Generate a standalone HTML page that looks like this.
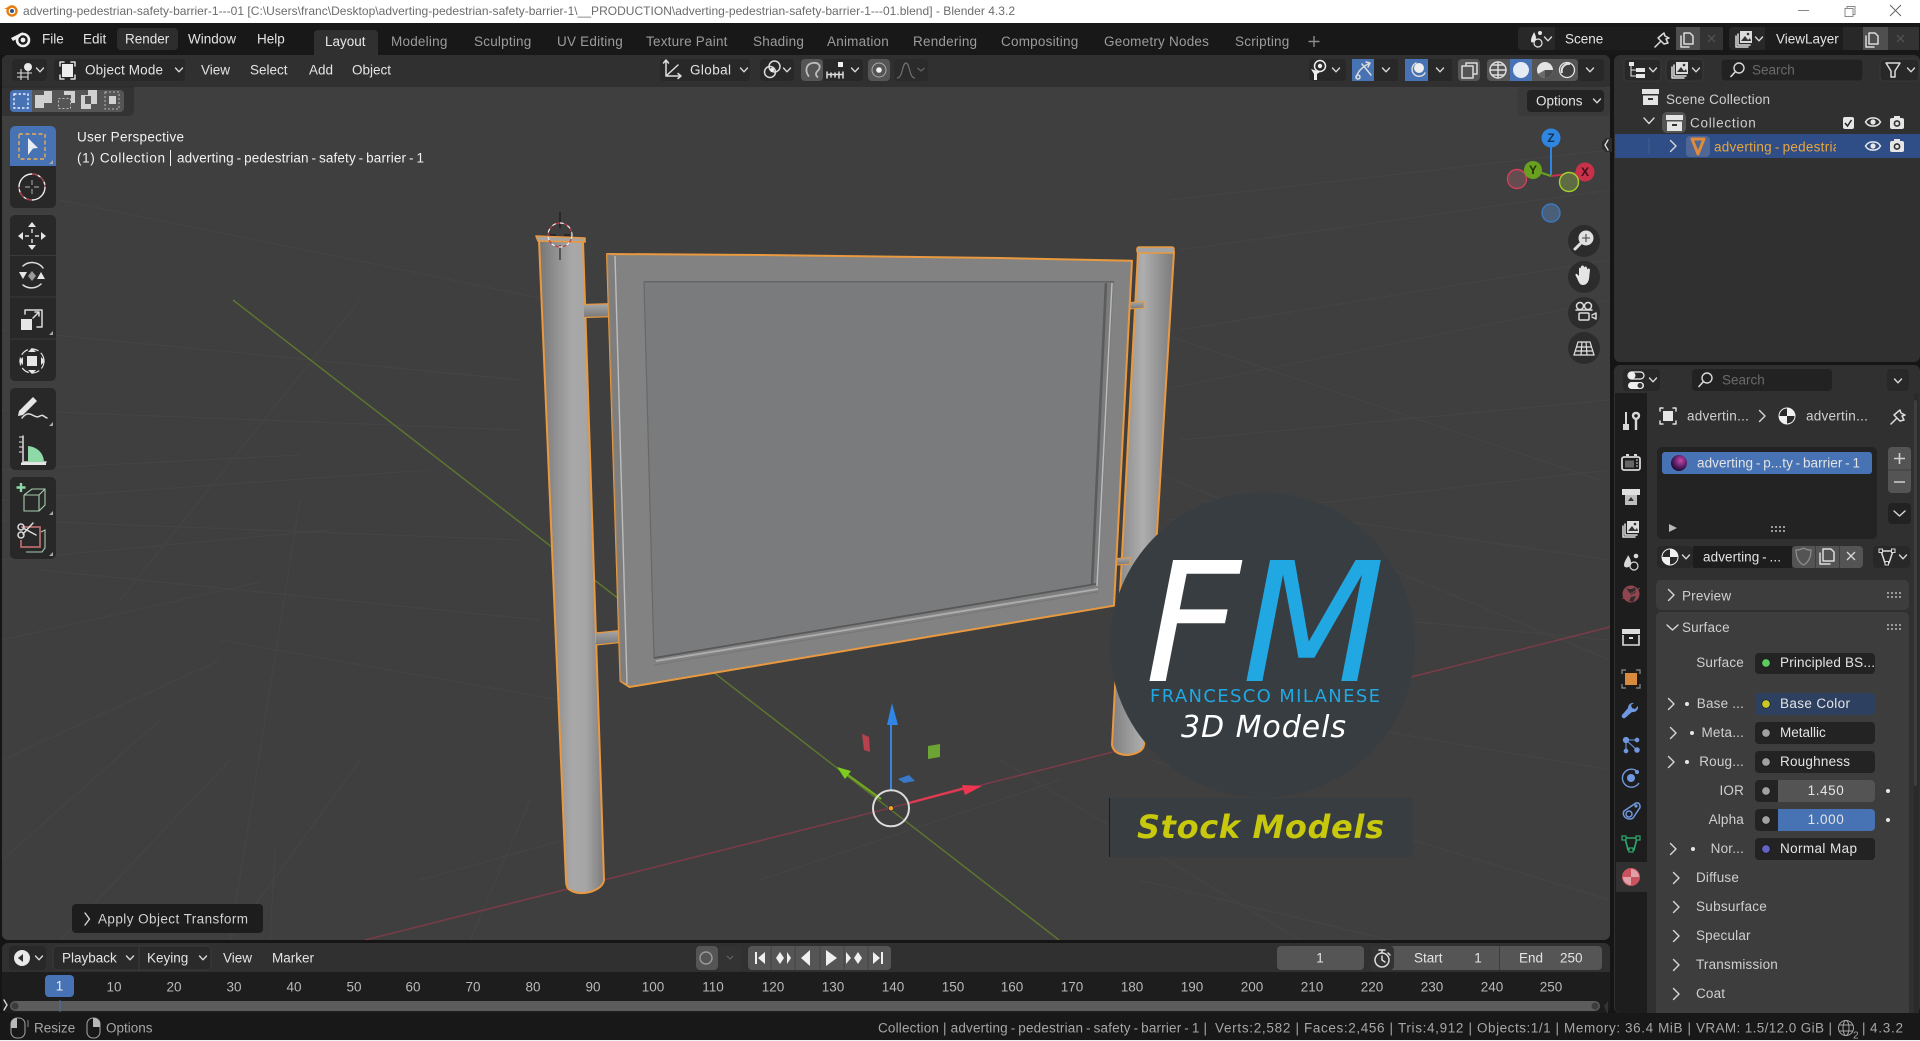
<!DOCTYPE html>
<html><head><meta charset="utf-8"><title>Blender</title>
<style>
html,body{margin:0;padding:0;background:#161616;width:1920px;height:1041px;overflow:hidden}
svg{position:absolute;left:0;top:0;display:block}
text{font-family:"Liberation Sans","DejaVu Sans",sans-serif;font-size:13.5px;dominant-baseline:central;fill:#d6d6d6;white-space:pre}
.m{fill:#e4e4e4}.tab{fill:#9c9c9c;font-size:13.5px;letter-spacing:.22px}.h{fill:#d2d2d2}.s{fill:#a6a6a6}.l{fill:#cfcfcf;letter-spacing:.18px}.e{text-anchor:end}.c{text-anchor:middle}
.n{fill:#b8b8b8}.v{letter-spacing:.6px}
.dv{font-family:"DejaVu Sans",sans-serif;dominant-baseline:alphabetic}
.ch{fill:none;stroke:#d8d8d8;stroke-width:1.4;stroke-linecap:round;stroke-linejoin:round}
.ic{fill:none;stroke:#dcdcdc;stroke-width:1.5;stroke-linecap:round;stroke-linejoin:round}
.w{fill:#e4e4e4}
</style></head><body>
<svg width="1920" height="1041" viewBox="0 0 1920 1041" xmlns="http://www.w3.org/2000/svg">
<defs>
<linearGradient id="pl" x1="0" x2="1" y1="0" y2="0"><stop offset="0" stop-color="#767676"/><stop offset=".5" stop-color="#a8a8a8"/><stop offset=".72" stop-color="#a6a6a6"/><stop offset="1" stop-color="#7c7c7c"/></linearGradient>
<linearGradient id="pr" x1="0" x2="1" y1="0" y2="0"><stop offset="0" stop-color="#808080"/><stop offset=".5" stop-color="#aeaeae"/><stop offset="1" stop-color="#7a7a7a"/></linearGradient>
<linearGradient id="cn" x1="0" x2="0" y1="0" y2="1"><stop offset="0" stop-color="#a8a8a8"/><stop offset="1" stop-color="#777"/></linearGradient>
<radialGradient id="sph" cx=".6" cy=".35" r=".7"><stop offset="0" stop-color="#c84aa8"/><stop offset=".55" stop-color="#5c1f6a"/><stop offset="1" stop-color="#140a24"/></radialGradient>
<clipPath id="vp"><rect x="2" y="87" width="1608" height="853"/></clipPath>
<clipPath id="oc"><rect x="1714" y="134" width="122" height="24"/></clipPath>
<g id="dn"><path class="ch" d="M-3.5 -2 L0 1.8 L3.5 -2"/></g>
<g id="rt"><path class="ch" d="M-2.5 -5.5 L3 0 L-2.5 5.5"/></g>
<g id="coll"><path class="w" d="M0 0h17v5H0zM1 6.5h15V16H1z"/><rect x="6" y="9" width="5" height="2" fill="#303030"/></g>
<g id="eye"><path d="M-7.5 0C-4.500 -5.500 4.500 -5.500 7.500 0C4.500 5.500 -4.500 5.500 -7.500 0Z" fill="none" stroke="#e6e6e6" stroke-width="1.500"/><circle r="2.600" fill="#e6e6e6"/></g>
<g id="cam"><rect x="-7" y="-5" width="14" height="11" rx="2" fill="#e6e6e6"/><rect x="-3" y="-7" width="6" height="3" fill="#e6e6e6"/><circle cy=".5" r="3.4" fill="#303030"/><circle cy=".5" r="1.8" fill="#e6e6e6"/></g>
<g id="dots"><path fill="#9a9a9a" d="M0 0h2v2H0zM4 0h2v2H4zM8 0h2v2H8zM12 0h2v2h-2zM0 4h2v2H0zM4 4h2v2H4zM8 4h2v2H8zM12 4h2v2h-2z"/></g>
<g id="crn"><path d="M0 4L4 0V4Z" fill="#a8a8a8"/></g>
<g id="search"><circle cx="2" cy="-2" r="5" fill="none" stroke="#d8d8d8" stroke-width="1.4"/><path d="M-1.5 1.5L-6 6.5" stroke="#d8d8d8" stroke-width="1.6" stroke-linecap="round"/></g>
<g id="filt"><path class="ic" d="M-7 -7H7L2 1V7L-2 7V1Z"/></g>
<g id="imgs"><path class="ic" stroke-width="1.2" d="M-8 -3V8H4M-6 -5V6H6"/><rect x="-4" y="-8" width="12" height="12" fill="#dcdcdc"/><path d="M-3 2L1 -3L4 1L6 -1L7 2Z" fill="#333"/><circle cx="4" cy="-5" r="1.3" fill="#333"/></g>
<g id="pin"><path class="ic" stroke-width="1.2" d="M-8 8L-2 2M-5 -1L1 -6L2 -3L6 -1L3 0L5 4L1 5Z" stroke="#8f8f8f"/></g>
<g id="mat"><circle r="8" fill="#f0f0f0"/><path d="M0 -8A8 8 0 0 0 -8 0H0V8A8 8 0 0 0 8 0H0Z" fill="#2a2a2a"/><circle r="8" fill="none" stroke="#f0f0f0" stroke-width="1"/></g>
</defs>

<!-- base -->
<rect width="1920" height="1041" fill="#151515"/>
<rect width="1920" height="23" fill="#fff"/>
<rect y="1040" width="1920" height="1" fill="#f2f2f2"/>
<rect y="23" width="1920" height="32" fill="#181818"/>

<!-- title bar -->
<circle cx="12" cy="11" r="4.5" fill="none" stroke="#e87d0d" stroke-width="2.4"/><circle cx="12" cy="11" r="2" fill="#265787"/><path d="M4 9L12 5L10 9Z" fill="#e87d0d"/>
<text x="23" y="11" textLength="992" style="font-size:12px;fill:#6c6c6c">adverting-pedestrian-safety-barrier-1---01 [C:\Users\franc\Desktop\adverting-pedestrian-safety-barrier-1\__PRODUCTION\adverting-pedestrian-safety-barrier-1---01.blend] - Blender 4.3.2</text>
<path d="M1798 10.5h11" stroke="#888" stroke-width="1"/>
<path d="M1845 8.5h8v8h-8zM1847 8.5v-2h8v8h-2" fill="none" stroke="#8a8a8a"/>
<path d="M1890 5l11 11M1901 5l-11 11" stroke="#666" stroke-width="1"/>

<!-- top bar -->
<g transform="translate(21,39)"><circle cx="2" cy="1" r="6" fill="none" stroke="#efefef" stroke-width="2.6"/><circle cx="2" cy="1" r="2.4" fill="#efefef"/><path d="M-10 -1L2 -7L-1 -2L-8 2Z" fill="#efefef"/></g>
<text class="m" x="42" y="39">File</text><text class="m" x="83" y="39">Edit</text>
<rect x="117" y="28" width="61" height="22" rx="4" fill="#2d2d2d"/>
<text class="m" x="125" y="39">Render</text><text class="m" x="188" y="39">Window</text><text class="m" x="257" y="39">Help</text>
<path d="M314 34a4 4 0 0 1 4-4h56a4 4 0 0 1 4 4v21h-64z" fill="#303030"/>
<text x="325" y="41.5" style="fill:#e8e8e8">Layout</text>
<text class="tab" x="391" y="41.5">Modeling</text><text class="tab" x="474" y="41.5">Sculpting</text><text class="tab" x="557" y="41.5">UV Editing</text><text class="tab" x="646" y="41.5">Texture Paint</text><text class="tab" x="753" y="41.5">Shading</text><text class="tab" x="827" y="41.5">Animation</text><text class="tab" x="913" y="41.5">Rendering</text><text class="tab" x="1001" y="41.5">Compositing</text><text class="tab" x="1104" y="41.5">Geometry Nodes</text><text class="tab" x="1235" y="41.5">Scripting</text>
<path d="M1314 36v11M1308.500 41.500h11" stroke="#8c8c8c" stroke-width="1.4"/>

<rect x="1518" y="27" width="205" height="23" rx="4" fill="#282828"/><rect x="1555" y="27" width="100" height="23" fill="#1d1d1d"/><rect x="1655" y="27" width="35" height="23" fill="#1d1d1d"/>
<rect x="1676" y="27" width="24" height="23" fill="#4f4f4f"/><rect x="1700" y="27" width="23" height="23" fill="#333"/>
<g transform="translate(1537,39)"><path d="M-6 2C-6 -2 -3 -6 -3 -7C-2 -5 -1 -3 -1 -1C-1 3 -6 5 -6 2Z" fill="#e6e6e6"/><circle cx="1" cy="4" r="4" fill="none" stroke="#e6e6e6" stroke-width="1.2"/><circle cx="3" cy="-6" r="2" fill="#e6e6e6"/></g>
<use href="#dn" x="1548" y="39"/>
<text class="m" x="1565" y="39">Scene</text>
<use href="#pin" x="1663" y="39"/>
<path d="M1684 33h6l3 3v8h-9zM1681 36v11h8" class="ic" stroke-width="1.2"/>
<path d="M1708 35l7 7M1715 35l-7 7" stroke="#555" stroke-width="1.2"/>
<rect x="1729" y="27" width="190" height="23" rx="4" fill="#282828"/><rect x="1765" y="27" width="78" height="23" fill="#1d1d1d"/>
<rect x="1863" y="27" width="25" height="23" fill="#4f4f4f"/><rect x="1888" y="27" width="31" height="23" fill="#333"/>
<use href="#imgs" x="1744" y="39"/><use href="#dn" x="1759" y="39"/>
<text class="m" x="1776" y="39">ViewLayer</text>
<path d="M1869 33h6l3 3v8h-9zM1866 36v11h8" class="ic" stroke-width="1.2"/>
<path d="M1897 35l7 7M1904 35l-7 7" stroke="#555" stroke-width="1.2"/>

<!-- viewport -->
<rect x="2" y="55" width="1608" height="885" rx="6" fill="#3f3f3f"/>
<g clip-path="url(#vp)">
 <g stroke="#454545" stroke-width="1" fill="none">
  <path d="M2 640L260 582M2 560L330 530M2 500L430 470M2 470L300 455M2 760L220 660M2 860L160 720M60 940L230 760M230 940L360 760M470 940L530 800M270 940L275 850M550 300L60 200M520 380L2 330M520 430L2 410M520 540L2 520M540 620L40 570M560 700L220 640"/>
  <path d="M1110 400L1610 300M1180 330L1610 260M1180 440L1610 400M1170 520L1610 470M1180 600L1610 640M1150 760L1610 900M1200 500L1610 560M1140 880L1390 940M1000 760L1300 940M1200 700L1610 770M1180 250L1610 190M1170 200L1610 150"/>
  <path d="M1000 280L1600 480M1150 470L1610 660M300 500L230 940M360 300L120 600M420 880L600 830M760 880L1060 780"/>
 </g>
 <path d="M233 300L1059 940" stroke="#5c7530" stroke-width="1.500"/>
 <path d="M365 940L1610 627" stroke="#7a3c48" stroke-width="1.500"/>

 <!-- right pole -->
 <path d="M1138 252L1174 252L1144 745Q1143 753 1128 755Q1114 755 1112 745Z" fill="url(#pr)" stroke="#e9993f" stroke-width="2" stroke-linejoin="round"/>
 <rect x="1137" y="247" width="37" height="6" rx="2" fill="#a2a2a2" stroke="#e9993f" stroke-width="1.5"/>
 <!-- left pole -->
 <path d="M539 240L583 242L604 880Q603 888 590 892Q578 895 570 890Q566 888 566 880Z" fill="url(#pl)" stroke="#e9993f" stroke-width="2" stroke-linejoin="round"/>
 <path d="M536 236L585 238L585 242L538 241Z" fill="#a4a4a4" stroke="#e9993f" stroke-width="1.600" stroke-linejoin="round"/>
 <!-- connectors -->
 <path d="M584 304.500L615 303.500L615 316.500L584 317.500" fill="url(#cn)" stroke="#e9993f" stroke-width="1.200"/>
 <rect x="609" y="304" width="6" height="12" rx="2.500" fill="#6b6b6b"/>
 <path d="M596 633L625 630L625 642L596 645" fill="url(#cn)" stroke="#e9993f" stroke-width="1.200"/>
 <rect x="620" y="631" width="6" height="11" rx="2.500" fill="#6b6b6b"/>
 <path d="M1130 302.500L1144 301.500L1144 308L1130 309" fill="url(#cn)" stroke="#e9993f" stroke-width="1"/>
 <path d="M1116 558.500L1130 557.500L1130 564L1116 565" fill="url(#cn)" stroke="#e9993f" stroke-width="1"/>
 <!-- panel -->
 <path d="M607 254L760 255L1000 258L1132 260.700L1114 605.700L629.500 687L620.500 681Z" fill="#828282" stroke="#e9993f" stroke-width="2" stroke-linejoin="round"/>
 <path d="M607 254L615 256L627 684L620.500 681Z" fill="#7c7c7c" opacity=".7"/>
 <path d="M615 256L627 684" stroke="#bdbdbd" stroke-width="1.400"/>
 <path d="M644 281.700L1114 281.700L1098 586.700L654 658Z" fill="#7a7b7d"/>
 <path d="M644 281.700L1114 281.700" stroke="#636363" stroke-width="1.400"/>
 <path d="M644 281.700L654 658" stroke="#686868" stroke-width="1.200"/>
 <path d="M1106 283L1092 584" stroke="#5c5c5c" stroke-width="2.600"/>
 <path d="M1112 283L1097 586" stroke="#bcbcbc" stroke-width="1.400"/>
 <path d="M654 658L1096 584" stroke="#585858" stroke-width="1.800"/>
 <path d="M656 661L1098 589" stroke="#aeaeae" stroke-width="1.800"/>
 <path d="M654 665L1098 592" stroke="#767676" stroke-width="1"/>

 <!-- 3D cursor -->
 <path d="M560 212V228M560 245V260" stroke="#111" stroke-width="1"/>
 <circle cx="560" cy="235" r="12" fill="none" stroke="#f0f0f0" stroke-width="1.2" stroke-dasharray="4 4"/>
 <circle cx="560" cy="235" r="12" fill="none" stroke="#c0394a" stroke-width="1.2" stroke-dasharray="4 4" stroke-dashoffset="4"/>
 <path d="M550 235H556M564 235H570" stroke="#111" stroke-width="1"/>

 <!-- object gizmo -->
 <path d="M891 790V722" stroke="#3d82d8" stroke-width="2"/>
 <path d="M892 703L898 725H887Z" fill="#2f86e6"/>
 <path d="M881 799L841 770" stroke="#72a620" stroke-width="2.2"/>
 <path d="M837 767L851 771L845 779Z" fill="#7ccc1e"/>
 <path d="M909 803L965 788" stroke="#e23a52" stroke-width="2.2"/>
 <path d="M982 786L965 795L962 785Z" fill="#ee3650"/>
 <path d="M898 779L909 775L915 781L904 783Z" fill="#3a78c8"/>
 <path d="M862 734L869 737L870 752L864 750Z" fill="#b8414c"/>
 <path d="M928 746L940 744V757L928 759Z" fill="#6da534"/>
 <circle cx="891" cy="808.300" r="18" fill="none" stroke="#dcdcdc" stroke-width="2"/>
 <circle cx="891" cy="808.300" r="2.600" fill="#f0a030" stroke="#222" stroke-width=".6"/>
</g>

<!-- logo -->
<circle cx="1262.500" cy="645" r="152.500" fill="#373d41"/>
<rect x="1110" y="798" width="303" height="59" fill="#373d41"/>
<path d="M1109.500 798V857" stroke="#1c1c1c" stroke-width="1"/>
<text class="dv" x="1137" y="838" textLength="247" style="font-size:32px;font-weight:bold;font-style:italic;fill:#c8c80c">Stock Models</text>
<text class="dv" x="1145" y="681" style="font-size:166px;font-style:italic;fill:#fff">F</text>
<text class="dv" x="1242" y="681" style="font-size:166px;font-style:italic;fill:#21a7e1">M</text>
<text class="dv" x="1150" y="702" textLength="230" style="font-size:18px;fill:#21a7e1">FRANCESCO MILANESE</text>
<text class="dv" x="1181" y="737" textLength="165" style="font-size:30px;font-style:italic;fill:#fff">3D Models</text>

<!-- viewport header -->
<path d="M2 87V61a6 6 0 0 1 6-6H1604a6 6 0 0 1 6 6V87Z" fill="#303030"/>
<rect x="12" y="59" width="35" height="22" rx="4" fill="#282828"/>
<g transform="translate(26,70)"><path d="M-9 3H6M-9 7H2M-5 -1V10M2 0V10" stroke="#dcdcdc" stroke-width="1.1" fill="none"/><circle cx="2" cy="-3" r="4" fill="#e8e8e8"/></g><use href="#dn" x="40" y="70"/>
<rect x="54" y="59" width="131" height="22" rx="4" fill="#282828"/>
<path d="M60 66v-4h4M71 62h4v4M60 75v4h4M71 79h4v-4" class="ic" stroke-width="1.2"/><rect x="62" y="64" width="11" height="13" fill="#eee"/>
<text class="m" x="85" y="70" textLength="78">Object Mode</text><use href="#dn" x="179" y="70"/>
<text class="m" x="201" y="70">View</text><text class="m" x="250" y="70">Select</text><text class="m" x="309" y="70">Add</text><text class="m" x="352" y="70">Object</text>

<rect x="660" y="59" width="90" height="22" rx="4" fill="#282828"/>
<path d="M666 62V76H681M666 76L678 65M666 60l-2.500 3M666 60l2.500 3M681 76l-3-2.500M681 76l-3 2.500" class="ic" stroke-width="1.2"/>
<text class="m" x="690" y="70" textLength="41">Global</text><use href="#dn" x="744" y="70"/>
<rect x="760" y="59" width="34" height="22" rx="4" fill="#282828"/>
<g transform="translate(771,70)"><circle cx="-1" cy="2" r="5.500" class="ic" stroke-width="1.2"/><circle cx="3.500" cy="-3.500" r="5.500" class="ic" stroke-width="1.2"/><circle cx="1" cy="0" r="2" fill="#eee"/></g><use href="#dn" x="787" y="70"/>
<rect x="801" y="59" width="22" height="22" rx="4" fill="#555"/>
<path d="M817.500 77C814.500 74 816.500 72 818.500 70C821.500 66 818.500 62 812.500 63C806.500 64 804.500 70 808.500 76" fill="none" stroke="#bdbdbd" stroke-width="1.800" stroke-linecap="round"/>
<rect x="823" y="59" width="40" height="22" rx="4" fill="#282828"/>
<path d="M827 74.500H843M827 72v6M831 73v4M835 73v4M839 72v6M843 72v6" class="ic" stroke-width="1.1"/><rect x="838" y="62" width="5" height="5" fill="#eee"/><use href="#dn" x="855" y="70"/>
<rect x="868" y="59" width="22" height="22" rx="4" fill="#555"/>
<circle cx="879" cy="70" r="7" fill="none" stroke="#aaa" stroke-width="1"/><circle cx="879" cy="70" r="2.800" fill="#f2f2f2"/>
<rect x="894" y="59" width="34" height="22" rx="4" fill="#2b2b2b"/>
<path d="M897 78C903 78 902 63 906 63S909 78 915 78" fill="none" stroke="#707070" stroke-width="1.2"/><path d="M917.500 68l3.500 3 3.500-3" fill="none" stroke="#666" stroke-width="1.2"/>

<rect x="1309" y="59" width="37" height="22" rx="4" fill="#282828"/>
<g transform="translate(1320,70)"><path d="M-9 -1L0 2L-3 4L-3 10L-6 10L-6 4Z" fill="#eee"/><circle cx="0" cy="-4" r="5.500" fill="none" stroke="#eee" stroke-width="1.500"/><circle cx="0" cy="-4" r="2.200" fill="#eee"/></g><use href="#dn" x="1336" y="70"/>
<rect x="1352" y="59" width="22" height="22" fill="#4772b3"/><rect x="1374" y="59" width="24" height="22" fill="#282828"/>
<path d="M1356 78C1358 70 1364 66 1370 63M1366 62l4 1-2 4" class="ic" stroke-width="1.2"/><circle cx="1358" cy="77" r="2" class="ic" stroke-width="1"/><path d="M1362 64l9 11" class="ic" stroke-width="1.100"/><use href="#dn" x="1386" y="70"/>
<rect x="1405" y="59" width="23" height="22" fill="#4772b3"/><rect x="1428" y="59" width="24" height="22" fill="#282828"/>
<circle cx="1419" cy="68" r="5" fill="#eee"/><path d="M1416 63a7 7 0 1 0 9 10" class="ic" stroke-width="1.200"/><use href="#dn" x="1440" y="70"/>
<rect x="1458" y="59" width="22" height="22" rx="4" fill="#555"/>
<path d="M1462 66h11v12h-11zM1466 66v-3h11v11h-4" class="ic" stroke-width="1.1"/>
<rect x="1487" y="59" width="91" height="22" rx="4" fill="#555"/><rect x="1510" y="59" width="22" height="22" fill="#4772b3"/>
<g class="ic" stroke-width="1.100" stroke="#cfcfcf"><circle cx="1498" cy="70" r="8"/><path d="M1490 70H1506M1498 62V78M1492 65H1504M1492 75H1504"/></g>
<circle cx="1521" cy="70" r="8" fill="#e6ecf6"/>
<circle cx="1545" cy="70" r="8" fill="#e4e4e4"/><path d="M1545 70V78A8 8 0 0 0 1553 70Z" fill="#4c4c4c"/><path d="M1545 70L1538 74A8 8 0 0 0 1545 78Z" fill="#6a6a6a"/>
<circle cx="1567" cy="70" r="7.500" fill="#3f3f3f" stroke="#e4e4e4" stroke-width="1.300"/><path d="M1562 73a7 7 0 0 1 8-9" fill="none" stroke="#e4e4e4" stroke-width="2"/>
<rect x="1578" y="59" width="26" height="22" rx="4" fill="#282828"/><use href="#dn" x="1590" y="70"/>

<!-- tool settings -->
<path d="M2 87H134V110a6 6 0 0 1-6 6H2Z" fill="#333"/>
<rect x="10" y="90" width="114" height="22" rx="4" fill="#555"/>
<path d="M10 94a4 4 0 0 1 4-4H32V112H14a4 4 0 0 1-4-4Z" fill="#4772b3"/>
<rect x="14" y="94" width="14" height="14" fill="none" stroke="#eef" stroke-width="1.400" stroke-dasharray="2.500 2"/>
<path d="M35 104V95H44V91H52V103H44V108H35Z" fill="#d0d0d0"/>
<path d="M64 91h11v12h-4v-8h-7Z" fill="#d0d0d0"/><rect x="58.500" y="98.500" width="12" height="10" fill="none" stroke="#bbb" stroke-dasharray="2 2"/>
<path d="M81 95h10v14H81Z" fill="#d0d0d0"/><path d="M88 90h9v14h-6v-9h-3Z" fill="#d0d0d0"/><rect x="85" y="96" width="6" height="8" fill="#555"/>
<rect x="105" y="92" width="14" height="17" fill="none" stroke="#b8b8b8" stroke-dasharray="2 2"/><rect x="109" y="96" width="7" height="8" fill="#d0d0d0"/>
<path d="M2 87H134" stroke="#2a2a2a"/>

<rect x="1517" y="87" width="93" height="29" rx="6" fill="#3a3a3a"/>
<rect x="1527" y="90" width="77" height="22" rx="4" fill="#232323"/>
<text class="m" x="1536" y="101">Options</text><use href="#dn" x="1597" y="101"/>

<text x="77" y="137" style="fill:#f2f2f2" textLength="107">User Perspective</text>
<text x="77" y="158" style="fill:#f2f2f2" textLength="88">(1) Collection</text>
<path d="M170.500 150V166" stroke="#f2f2f2" stroke-width="1"/>
<text x="177" y="158" style="fill:#f2f2f2" textLength="247">adverting&#8201;-&#8201;pedestrian&#8201;-&#8201;safety&#8201;-&#8201;barrier&#8201;-&#8201;1</text>

<!-- toolbar -->
<rect x="10" y="126" width="46" height="82" rx="5" fill="#282828"/>
<path d="M10 131a5 5 0 0 1 5-5H51a5 5 0 0 1 5 5V166H10Z" fill="#4772b3"/>
<rect x="19" y="134" width="26" height="25" fill="none" stroke="#e8ae55" stroke-width="1.400" stroke-dasharray="4 2.500"/>
<path d="M28 138L38 148L33 148.500L28 155Z" fill="#e8ecf4"/>
<use href="#crn" x="49" y="160"/>
<circle cx="32" cy="187" r="13" fill="none" stroke="#eee" stroke-width="1.400"/><path d="M32 174a13 13 0 0 1 13 13M32 200a13 13 0 0 1-13-13" fill="none" stroke="#a03a44" stroke-width="1.400" stroke-dasharray="6 3"/>
<path d="M32 180v5M32 189v5M25 187h5M34 187h5" stroke="#999" stroke-width="1.200"/>

<rect x="10" y="215" width="46" height="166" rx="5" fill="#282828"/>
<path d="M10 255.500H56M10 297H56M10 339H56M10 428H56M10 517H56" stroke="#3a3a3a"/>
<g fill="#e6e6e6"><path d="M32 222l4 5h-8ZM32 250l4-5h-8ZM18 236l5-4v8ZM46 236l-5-4v8Z"/></g><path d="M32 229v4M32 239v4M25 236h4M35 236h4" stroke="#e6e6e6" stroke-width="1.400"/>
<path d="M23 266a13 12 0 0 1 20 2M41 284a13 12 0 0 1-18 1" class="ic"/><path d="M19 272h8l-4 7ZM37 279h8l-4-7Z" fill="#e6e6e6"/><path d="M32 271l4 5-4 5-4-5Z" fill="#9a9a9a"/>
<path d="M25 314v-4h17v17h-5" class="ic" stroke="#a8a8a8"/><rect x="21" y="319" width="11" height="11" fill="#e6e6e6"/><path d="M33 318l6-6M35 312h4v4" class="ic" stroke-width="1.200"/>
<use href="#crn" x="49" y="331"/>
<circle cx="32" cy="361" r="12" fill="none" stroke="#e6e6e6" stroke-width="1.200" stroke-dasharray="8 3"/><rect x="27" y="356" width="10" height="10" fill="#e6e6e6"/><path d="M32 348l4 4h-8ZM32 374l4-4h-8ZM19 361l4-4v8ZM45 361l-4-4v8Z" fill="#e6e6e6"/>

<rect x="10" y="388" width="46" height="82" rx="5" fill="#282828"/>
<path d="M19 411L33 397L37 401L23 415L18 416Z" fill="#e6e6e6"/><path d="M22 418C30 408 34 420 40 416C43 414 44 417 47 418" class="ic" stroke="#a7dcb4" stroke-width="1.200"/>
<use href="#crn" x="49" y="422"/>
<path d="M23 436V462H46" class="ic" stroke="#e6e6e6" stroke-width="2"/><path d="M28 462V446A17 16 0 0 1 44 462Z" fill="#8fd9a8"/><path d="M21 462.500H46V465H21Z" fill="#e6e6e6"/>
<path d="M19 437h4M19 442h3M19 447h4M19 452h3" stroke="#e6e6e6" stroke-width="1"/>

<rect x="10" y="477" width="46" height="82" rx="5" fill="#282828"/>
<path d="M21 483v9M16.500 487.500h9" stroke="#8fd9a8" stroke-width="2.400"/>
<path d="M24 495H39L45 489M24 495V511H39V495M39 511L45 505V489H32L24 495" fill="none" stroke="#a7cbb0" stroke-width="1.100"/>
<use href="#crn" x="49" y="511"/>
<path d="M21 527H40V547H21V540" fill="none" stroke="#b56a6a" stroke-width="1.800"/><path d="M26 552H42L45 548V530L41 532" fill="none" stroke="#a7cbb0" stroke-width="1.100"/>
<circle cx="21" cy="527" r="3" class="ic"/><circle cx="21" cy="535" r="3" class="ic"/><path d="M23 528L36 535M23 534L33 523" class="ic" stroke-width="1.400"/>
<use href="#crn" x="49" y="552"/>

<!-- nav gizmo -->
<path d="M1551 138V176" stroke="#2f86e0" stroke-width="2"/><path d="M1551 176L1533 170" stroke="#6aa020" stroke-width="2"/><path d="M1551 176L1585 172" stroke="#c7324a" stroke-width="2"/>
<circle cx="1517" cy="179" r="9.500" fill="#644c50" stroke="#d0405a" stroke-width="1.400"/>
<circle cx="1551" cy="213" r="9" fill="#4a5f7a" stroke="#3a7ac0" stroke-width="1.400"/>
<circle cx="1551" cy="138" r="9.500" fill="#2f86e0"/><text class="c" x="1551" y="138" style="font-size:12px;font-weight:bold;fill:#15314f">Z</text>
<circle cx="1533" cy="170" r="9" fill="#6aa020"/><text class="c" x="1533" y="170" style="font-size:12px;font-weight:bold;fill:#1f3006">Y</text>
<circle cx="1585" cy="172" r="9.500" fill="#c7324a"/><text class="c" x="1585" y="172" style="font-size:12px;font-weight:bold;fill:#3e0d16">X</text>
<circle cx="1569" cy="182" r="9.500" fill="#5f6b42" stroke="#a3d02e" stroke-width="1.400"/>
<g fill="#2c2c2c"><circle cx="1584" cy="241" r="16"/><circle cx="1584" cy="277" r="16"/><circle cx="1584" cy="313" r="16"/><circle cx="1584" cy="348" r="16"/></g>
<circle cx="1586" cy="238" r="7.500" fill="#e0e0e0"/><path d="M1586 234v8M1582 238h8" stroke="#444" stroke-width="1.100"/><path d="M1580 244l-5 5" stroke="#e0e0e0" stroke-width="3" stroke-linecap="round"/>
<path d="M1577 278c-2-3-2-5 0-4l2 2 0-7c0-2 2-2 2 0v-2c0-2 3-2 3 0l0 1c0-2 3-2 3 0l0 2c0-2 3-2 3 0l-1 9c-1 4-3 6-6 6-3 0-4-2-6-7Z" fill="#e4e4e4"/>
<g class="ic" stroke-width="1.300"><circle cx="1580" cy="306" r="3.500"/><circle cx="1588" cy="306" r="3.500"/><rect x="1579" y="313" width="10" height="7" rx="1"/><path d="M1592 315l4-2v6l-4-2M1576 310h16"/></g>
<path d="M1578 342h12l4 13h-20ZM1582 342l-1 13M1586 342l1 13M1576 347h16M1575 351h18" fill="none" stroke="#e4e4e4" stroke-width="1.200"/>
<path d="M1602 142l4-4h6v14h-6l-4-4Z" fill="#2c2c2c"/><path d="M1608 140l-3 5 3 5" class="ch" stroke="#999"/>

<rect x="72" y="904" width="191" height="29" rx="4" fill="#1d1d1d"/>
<path d="M85 913l4.500 6-4.500 6" class="ch" stroke="#aaa" stroke-width="1.100"/>
<text class="h" x="98" y="919" textLength="150">Apply Object Transform</text>

<!-- timeline -->
<rect x="2" y="943" width="1608" height="70" rx="6" fill="#1d1d1d"/>
<path d="M2 972V949a6 6 0 0 1 6-6H1604a6 6 0 0 1 6 6V972Z" fill="#303030"/>
<rect x="9" y="946" width="37" height="24" rx="4" fill="#282828"/>
<g transform="translate(22,958)"><circle r="8" fill="#e8e8e8"/><path d="M1 -4L-4 0L1 4Z" fill="#303030"/></g><use href="#dn" x="39" y="958"/>
<rect x="53" y="946" width="158" height="24" rx="4" fill="#2a2a2a" stroke="#3a3a3a"/><path d="M139 946V970" stroke="#3c3c3c"/>
<text class="m" x="62" y="958">Playback</text><use href="#dn" x="130" y="958"/>
<text class="m" x="147" y="958">Keying</text><use href="#dn" x="203" y="958"/>
<text class="m" x="223" y="958">View</text><text class="m" x="272" y="958">Marker</text>
<rect x="696" y="946" width="22" height="24" rx="4" fill="#555"/><rect x="718" y="946" width="24" height="24" rx="4" fill="#333"/>
<circle cx="706" cy="958" r="6" fill="none" stroke="#9a9a9a" stroke-width="1.400"/><path d="M727 956l3 3 3-3" fill="none" stroke="#666" stroke-width="1.100"/>
<rect x="748" y="946" width="143" height="24" rx="4" fill="#555"/>
<path d="M771 946V970M795 946V970M820 946V970M844 946V970M868 946V970" stroke="#444"/>
<g fill="#f0f0f0"><path d="M755 952h2v12h-2zM765 952v12l-7-6Z"/><path d="M780 952l4 6-4 6-4-6ZM787 952v12l4-6Z"/><path d="M810 950v16l-9-8Z"/><path d="M826 950l11 8-11 8Z"/><path d="M846 952v12l5-6Z"/><path d="M858 952l4 6-4 6-4-6Z"/><path d="M873 952v12l7-6ZM881 952h2v12h-2z"/></g>
<rect x="1277" y="946" width="87" height="24" rx="4" fill="#555"/><text class="c m" x="1320" y="958">1</text>
<rect x="1371" y="946" width="231" height="24" rx="4" fill="#555"/><rect x="1371" y="946" width="23" height="24" rx="4" fill="#333"/><path d="M1499.500 946V970" stroke="#3e3e3e"/>
<circle cx="1382" cy="960" r="7" class="ic" stroke="#e0e0e0"/><path d="M1382 956v4l3 2M1379 950h6M1382 950v3M1388 953l2 2" class="ic" stroke-width="1.200"/>
<text class="m" x="1414" y="958">Start</text><text class="c m" x="1478" y="958">1</text><text class="m" x="1519" y="958">End</text><text class="m" x="1560" y="958">250</text>

<text class="n c" x="114" y="987">10</text><text class="n c" x="174" y="987">20</text><text class="n c" x="234" y="987">30</text><text class="n c" x="294" y="987">40</text><text class="n c" x="354" y="987">50</text><text class="n c" x="413" y="987">60</text><text class="n c" x="473" y="987">70</text><text class="n c" x="533" y="987">80</text><text class="n c" x="593" y="987">90</text><text class="n c" x="653" y="987">100</text><text class="n c" x="713" y="987">110</text><text class="n c" x="773" y="987">120</text><text class="n c" x="833" y="987">130</text><text class="n c" x="893" y="987">140</text><text class="n c" x="953" y="987">150</text><text class="n c" x="1012" y="987">160</text><text class="n c" x="1072" y="987">170</text><text class="n c" x="1132" y="987">180</text><text class="n c" x="1192" y="987">190</text><text class="n c" x="1252" y="987">200</text><text class="n c" x="1312" y="987">210</text><text class="n c" x="1372" y="987">220</text><text class="n c" x="1432" y="987">230</text><text class="n c" x="1492" y="987">240</text><text class="n c" x="1551" y="987">250</text>
<rect x="10" y="1001" width="1590" height="10" rx="5" fill="#5c5c5c"/>
<circle cx="15" cy="1006" r="3.500" fill="#3c3c3c"/><circle cx="1595" cy="1006" r="3.500" fill="#3c3c3c"/>
<path d="M60 1000V1012" stroke="#4772b3" stroke-width="1"/>
<rect x="45" y="975" width="29" height="22" rx="4" fill="#4772b3"/><text class="c" x="59.500" y="986" style="fill:#eee">1</text>
<path d="M4 1000l3 5-3 5" class="ch" stroke="#888" stroke-width="1"/>
<path d="M1604 1006l4-5V1015Z" fill="#333"/>

<!-- outliner -->
<rect x="1614" y="55" width="306" height="307" rx="6" fill="#303030"/>
<rect x="1624" y="59" width="37" height="22" rx="4" fill="#282828" stroke="#3a3a3a"/>
<g fill="#e6e6e6"><rect x="1629" y="62" width="5" height="4"/><rect x="1636" y="68" width="9" height="4"/><rect x="1636" y="74" width="9" height="4"/></g><path d="M1631 66V76H1636M1631 70H1636" stroke="#e6e6e6" fill="none"/>
<use href="#dn" x="1653" y="70"/>
<rect x="1666" y="59" width="37" height="22" rx="4" fill="#282828" stroke="#3a3a3a"/><use href="#imgs" x="1680" y="70"/><use href="#dn" x="1696" y="70"/>
<rect x="1721" y="59" width="142" height="22" rx="4" fill="#222" stroke="#333"/><use href="#search" x="1737" y="70"/><text style="fill:#6a6a6a" x="1752" y="70">Search</text>
<rect x="1880" y="59" width="39" height="22" rx="4" fill="#282828" stroke="#3a3a3a"/><use href="#filt" x="1893" y="70"/><use href="#dn" x="1911" y="70"/>
<use href="#coll" x="1642" y="89"/><text class="l" x="1666" y="99.500">Scene Collection</text>
<path d="M1644 118l5 5.500 5-5.500" class="ch" stroke="#aaa"/>
<rect x="1662" y="112" width="24" height="21" rx="5" fill="#545454"/><use href="#coll" x="1666" y="115"/>
<text class="l" x="1690" y="123" textLength="66">Collection</text>
<rect x="1843" y="117" width="11" height="12" rx="2" fill="#e6e6e6"/><path d="M1845 123l2.500 3 4-6" fill="none" stroke="#222" stroke-width="1.500"/>
<use href="#eye" x="1873" y="122"/><use href="#cam" x="1897" y="123"/>
<rect x="1615" y="134" width="305" height="24" fill="#2f4d86"/>
<path d="M1649 138V154" stroke="#45608f"/><use href="#rt" x="1673" y="146"/>
<rect x="1686" y="136" width="24" height="21" rx="4" fill="#4f6794"/><path d="M1692 139h12l-6 15Z" fill="none" stroke="#e08a3c" stroke-width="3" stroke-linejoin="round"/>
<g clip-path="url(#oc)"><text x="1714" y="147" textLength="134" style="fill:#e8a63c">adverting&#8201;-&#8201;pedestrian</text></g>
<use href="#eye" x="1873" y="146"/><use href="#cam" x="1897" y="146"/>

<!-- properties -->
<rect x="1614" y="365" width="306" height="648" rx="6" fill="#303030"/>
<rect x="1623" y="369" width="37" height="22" rx="4" fill="#282828"/>
<g><rect x="1628" y="372" width="16" height="7" rx="3.500" fill="none" stroke="#eee" stroke-width="1.200"/><circle cx="1632" cy="375.500" r="3.500" fill="#eee"/><rect x="1628" y="382" width="16" height="7" rx="3.500" fill="#eee"/><circle cx="1640" cy="385.500" r="2.500" fill="#333"/></g><use href="#dn" x="1653" y="380"/>
<rect x="1692" y="369" width="140" height="22" rx="4" fill="#222"/><use href="#search" x="1705" y="380"/><text style="fill:#6a6a6a" x="1722" y="380">Search</text>
<rect x="1887" y="369" width="22" height="22" rx="4" fill="#282828"/><use href="#dn" x="1898" y="381"/>

<path d="M1615 393H1647V1013H1621a6 6 0 0 1-6-6Z" fill="#1d1d1d"/>
<rect x="1647" y="393" width="267" height="620" fill="#303030"/>
<rect x="1914" y="393" width="5" height="620" fill="#2a2a2a"/>
<rect x="1914" y="400" width="3" height="386" rx="1.500" fill="#3e3e3e"/>

<!-- tabs icons -->
<g transform="translate(1631,421)"><rect x="-8" y="3" width="6" height="6" fill="#d8d8d8"/><path d="M-5 -9V3" stroke="#d8d8d8" stroke-width="2"/><path d="M5 -8C1 -8 1 -3 5 -2V9M5 -8C9 -8 9 -3 5 -2" stroke="#d8d8d8" stroke-width="2.400" fill="none"/></g>
<g transform="translate(1631,463)"><rect x="-9" y="-6" width="18" height="13" rx="2" fill="none" stroke="#d8d8d8" stroke-width="1.800"/><rect x="-6" y="-2.500" width="9" height="7" fill="#666"/><path d="M5 -3h2M5 0h2M5 3h2" stroke="#d8d8d8" stroke-width="1"/><path d="M-5 -8h3M3 -8h3" stroke="#d8d8d8" stroke-width="2"/></g>
<g transform="translate(1631,496)"><path d="M-9 -7H9V-1H-9Z" fill="#e0e0e0"/><path d="M-6 -1H6V9H-6Z" fill="#bdbdbd"/><path d="M-3 5L0 1L3 5Z" fill="#333"/></g>
<use href="#imgs" x="1631" y="529"/>
<g transform="translate(1631,562)"><path d="M-7 3C-7 -1 -3 -5 -3 -7C-1 -4 0 -2 0 1C0 6 -7 7 -7 3Z" fill="#d8d8d8"/><circle cx="3" cy="4" r="4" fill="none" stroke="#d8d8d8" stroke-width="1.200"/><circle cx="5" cy="-6" r="2.300" fill="#d8d8d8"/></g>
<g transform="translate(1631,594)"><circle r="8.500" fill="#8f4650"/><path d="M-5 -6C-1 -4 2 -5 4 -7L5 -2L0 1L-2 -2ZM0 3L5 2L2 8L-2 7Z" fill="#2d2d2d"/><path d="M-9 5L9 -6" stroke="#8f4650" stroke-width="1"/></g>
<g transform="translate(1631,637)"><path d="M-9 -8H9V-3H-9Z" fill="#dcdcdc"/><path d="M-8 -2V8H8V-2" fill="none" stroke="#dcdcdc" stroke-width="1.600"/><path d="M-2 1H2" stroke="#dcdcdc" stroke-width="2"/></g>
<g transform="translate(1631,679)"><path d="M-9 -5v-4h4M5 -9h4v4M-9 5v4h4M5 9h4v-4" fill="none" stroke="#8f8f8f" stroke-width="1.200"/><rect x="-6" y="-6" width="12" height="12" fill="#d98a3c"/></g>
<path d="M1634 703a5 5 0 0 0-6 5l-6 7c-1 2 1 4 3 3l7-6a5 5 0 0 0 6-6l-3 3-3-1-1-3Z" fill="#6f98e0"/>
<g transform="translate(1631,745)" stroke="#6f98e0" fill="#6f98e0" stroke-width="1.100"><circle cx="-5" cy="-5" r="2.600"/><circle cx="6" cy="-5" r="1.800"/><circle cx="6" cy="5" r="2.200"/><circle cx="-5" cy="6" r="1.800"/><path d="M-5 -5L6 -5M-5 -5L6 5M-5 -5V6"/></g>
<g transform="translate(1631,778)"><path d="M7 -6A9 9 0 1 0 8 5" fill="none" stroke="#6f98e0" stroke-width="1.400"/><circle r="4" cx="0" cy="0" fill="#6f98e0"/><circle cx="6" cy="-6" r="2" fill="#6f98e0"/></g>
<g transform="translate(1631,811)"><path d="M-7 0L5 -8C9 -9 10 -4 8 -2L2 7C-2 10 -10 6 -7 0Z" fill="none" stroke="#6f98e0" stroke-width="1.500"/><circle cx="-2" cy="3" r="3" fill="none" stroke="#6f98e0" stroke-width="1.500"/><circle cx="5" cy="-5" r="1.600" fill="#6f98e0"/></g>
<g transform="translate(1631,844)"><path d="M-6 -6H6L3 6H-3Z" fill="none" stroke="#2ea86f" stroke-width="1.600"/><g fill="#1d1d1d" stroke="#2ea86f" stroke-width="1.200"><rect x="-9" y="-8" width="4" height="4"/><rect x="5" y="-8" width="4" height="4"/><rect x="-2" y="4" width="4" height="4"/></g></g>
<path d="M1616 862H1647V892H1616Z" fill="#303030"/>
<g transform="translate(1631,877)"><circle r="8.500" fill="#e0a0a8"/><path d="M0 -8.500A8.500 8.500 0 0 0 -8.500 0H0V8.500A8.500 8.500 0 0 0 8.500 0H0Z" fill="#c8525e"/><circle r="8.500" fill="none" stroke="#c8525e"/></g>

<!-- breadcrumb -->
<path d="M1660 411v-3h3M1673 408h3v3M1660 421v3h3M1673 424h3v-3" class="ic" stroke-width="1" stroke="#a0a0a0"/><rect x="1663" y="411" width="10" height="10" fill="#e6e6e6"/>
<text class="l" x="1687" y="416" textLength="62">advertin...</text>
<use href="#rt" x="1762" y="416"/>
<use href="#mat" x="1787" y="416"/>
<text class="l" x="1806" y="416" textLength="62">advertin...</text>
<use href="#pin" x="1899" y="416"/>

<!-- material list -->
<rect x="1657" y="447" width="220" height="92" rx="5" fill="#232323"/>
<rect x="1662" y="452" width="210" height="22" rx="3" fill="#4772b3"/>
<circle cx="1679" cy="463" r="8" fill="url(#sph)"/>
<text class="m" x="1697" y="463" textLength="163">adverting&#8201;-&#8201;p...ty&#8201;-&#8201;barrier&#8201;-&#8201;1</text>
<path d="M1669 524l8 4-8 4Z" fill="#b8b8b8"/>
<use href="#dots" x="1771" y="526"/>
<rect x="1888" y="447" width="23" height="46" rx="4" fill="#545454"/><path d="M1888 470H1911" stroke="#3e3e3e"/>
<path d="M1899.500 453v11M1894 458.500h11M1894 482h11" stroke="#d0d0d0" stroke-width="1.600"/>
<rect x="1888" y="503" width="23" height="21" rx="4" fill="#222"/><path d="M1894 511l5.500 5 5.500-5" class="ch"/>

<rect x="1657" y="546" width="36" height="22" rx="4" fill="#282828"/><use href="#mat" x="1670" y="557"/><use href="#dn" x="1686" y="557"/>
<rect x="1693" y="546" width="99" height="22" fill="#1d1d1d"/><text class="m" x="1703" y="557" textLength="78">adverting&#8201;-&#8201;...</text>
<rect x="1792" y="546" width="71" height="22" rx="4" fill="#545454"/><path d="M1815.500 546V568M1839.500 546V568" stroke="#3e3e3e"/>
<path d="M1796 550c3 0 6-1 7.500-2 1.500 1 4.500 2 7.500 2 0 7-2 12-7.500 15-5.500-3-7.500-8-7.500-15Z" fill="none" stroke="#909090" stroke-width="1.200"/>
<path d="M1823 549h8l3 3v9h-11zM1820 553v11h10" class="ic" stroke-width="1.200"/>
<path d="M1847 552l8 8M1855 552l-8 8" stroke="#d8d8d8" stroke-width="1.300"/>
<rect x="1873" y="546" width="37" height="22" rx="4" fill="#282828"/>
<g transform="translate(1887,557)"><path d="M-6 -6H6L2 6H-2Z" class="ic" stroke-width="1.200"/><g fill="#282828" stroke="#dcdcdc" stroke-width="1"><rect x="-8" y="-8" width="3.500" height="3.500"/><rect x="4.500" y="-8" width="3.500" height="3.500"/><rect x="-2" y="4.500" width="3.500" height="3.500"/></g></g><use href="#dn" x="1903" y="557"/>

<!-- panels -->
<rect x="1656" y="580" width="253" height="30" rx="5" fill="#3d3d3d"/>
<use href="#rt" x="1671" y="595"/><text class="l" x="1682" y="596">Preview</text><use href="#dots" x="1887" y="592"/>
<path d="M1656 617a5 5 0 0 1 5-5H1904a5 5 0 0 1 5 5V1013H1656Z" fill="#3d3d3d"/>
<path d="M1667 625l5.500 5 5.500-5" class="ch"/><text class="l" x="1682" y="627.500">Surface</text><use href="#dots" x="1887" y="624"/>

<text class="l e" x="1744" y="662.500">Surface</text>
<rect x="1755" y="653" width="120" height="21" rx="4" fill="#232323"/><circle cx="1766" cy="663" r="4.200" fill="#5ecb5e" stroke="#111" stroke-width=".6"/><text class="m" x="1780" y="662.500" textLength="95">Principled BS...</text>

<use href="#rt" x="1671" y="704"/><circle cx="1687" cy="704" r="2" fill="#e6e6e6"/><text class="l e" x="1744" y="703.500">Base ...</text>
<rect x="1755" y="693" width="120" height="22" rx="4" fill="#2e4060"/><circle cx="1766" cy="704" r="4.200" fill="#c7c729" stroke="#111" stroke-width=".6"/><text class="m" x="1780" y="703.500" textLength="70">Base Color</text>

<use href="#rt" x="1673" y="733"/><circle cx="1692" cy="733" r="2" fill="#e6e6e6"/><text class="l e" x="1744" y="732.500">Meta...</text>
<rect x="1755" y="722" width="120" height="22" rx="4" fill="#232323"/><circle cx="1766" cy="733" r="4.200" fill="#a1a1a1" stroke="#111" stroke-width=".6"/><text class="m" x="1780" y="732.500">Metallic</text>

<use href="#rt" x="1671" y="762"/><circle cx="1687" cy="762" r="2" fill="#e6e6e6"/><text class="l e" x="1744" y="761.500">Roug...</text>
<rect x="1755" y="751" width="120" height="22" rx="4" fill="#232323"/><circle cx="1766" cy="762" r="4.200" fill="#a1a1a1" stroke="#111" stroke-width=".6"/><text class="m" x="1780" y="761.500" textLength="70">Roughness</text>

<text class="l e" x="1744" y="790.500">IOR</text>
<rect x="1755" y="780" width="120" height="22" rx="4" fill="#232323"/><path d="M1778 780H1871a4 4 0 0 1 4 4V798a4 4 0 0 1-4 4H1778Z" fill="#545454"/><circle cx="1766" cy="791" r="4.200" fill="#a1a1a1" stroke="#111" stroke-width=".6"/><text class="m c v" x="1826" y="790.500">1.450</text><circle cx="1888" cy="791" r="2" fill="#e6e6e6"/>

<text class="l e" x="1744" y="819.500">Alpha</text>
<rect x="1755" y="809" width="120" height="22" rx="4" fill="#232323"/><path d="M1778 809H1871a4 4 0 0 1 4 4V827a4 4 0 0 1-4 4H1778Z" fill="#4772b3"/><circle cx="1766" cy="820" r="4.200" fill="#a1a1a1" stroke="#111" stroke-width=".6"/><text class="m c v" x="1826" y="819.500">1.000</text><circle cx="1888" cy="820" r="2" fill="#e6e6e6"/>

<use href="#rt" x="1673" y="849"/><circle cx="1693" cy="849" r="2" fill="#e6e6e6"/><text class="l e" x="1744" y="848.500">Nor...</text>
<rect x="1755" y="838" width="120" height="22" rx="4" fill="#232323"/><circle cx="1766" cy="849" r="4.200" fill="#6363c7" stroke="#111" stroke-width=".6"/><text class="m" x="1780" y="848.500" textLength="77">Normal Map</text>

<use href="#rt" x="1676" y="878"/><text class="l" x="1696" y="877.500">Diffuse</text>
<use href="#rt" x="1676" y="907"/><text class="l" x="1696" y="906.500" textLength="71">Subsurface</text>
<use href="#rt" x="1676" y="936"/><text class="l" x="1696" y="935.500">Specular</text>
<use href="#rt" x="1676" y="965"/><text class="l" x="1696" y="964.500" textLength="82">Transmission</text>
<use href="#rt" x="1676" y="994"/><text class="l" x="1696" y="993.500">Coat</text>

<!-- status bar -->
<rect y="1013" width="1920" height="27" fill="#181818"/>
<rect x="11" y="1018" width="14" height="20" rx="6" fill="none" stroke="#9a9a9a" stroke-width="1.100"/><path d="M11 1028V1024a6 6 0 0 1 6-6v10Z" fill="#b8b8b8"/>
<path d="M28 1020v7" stroke="#888"/>
<text class="s" x="34" y="1028">Resize</text>
<rect x="87" y="1018" width="13" height="20" rx="6" fill="none" stroke="#9a9a9a" stroke-width="1.100"/><path d="M93 1018v9h7v-3a6 6 0 0 0-6-6Z" fill="#b8b8b8"/>
<text class="s" x="106" y="1028">Options</text>
<text class="s" x="878" y="1028" textLength="329">Collection | adverting&#8201;-&#8201;pedestrian&#8201;-&#8201;safety&#8201;-&#8201;barrier&#8201;-&#8201;1 |</text>
<text class="s" x="1215" y="1028" textLength="84">Verts:2,582 |</text>
<text class="s" x="1304" y="1028" textLength="89">Faces:2,456 |</text>
<text class="s" x="1398" y="1028" textLength="74">Tris:4,912 |</text>
<text class="s" x="1477" y="1028" textLength="82">Objects:1/1 |</text>
<text class="s" x="1564" y="1028" textLength="127">Memory: 36.4 MiB |</text>
<text class="s" x="1696" y="1028" textLength="136">VRAM: 1.5/12.0 GiB |</text>
<g fill="none" stroke="#a6a6a6" stroke-width="1"><circle cx="1846" cy="1028" r="7.500"/><ellipse cx="1846" cy="1028" rx="3" ry="7.500"/><path d="M1839 1025H1853M1839 1031H1853"/></g>
<text class="s" x="1853" y="1036" style="font-size:10px">2</text>
<text class="s" x="1862" y="1028">|</text>
<text class="s" x="1870" y="1028" textLength="33">4.3.2</text>
</svg>
</body></html>
